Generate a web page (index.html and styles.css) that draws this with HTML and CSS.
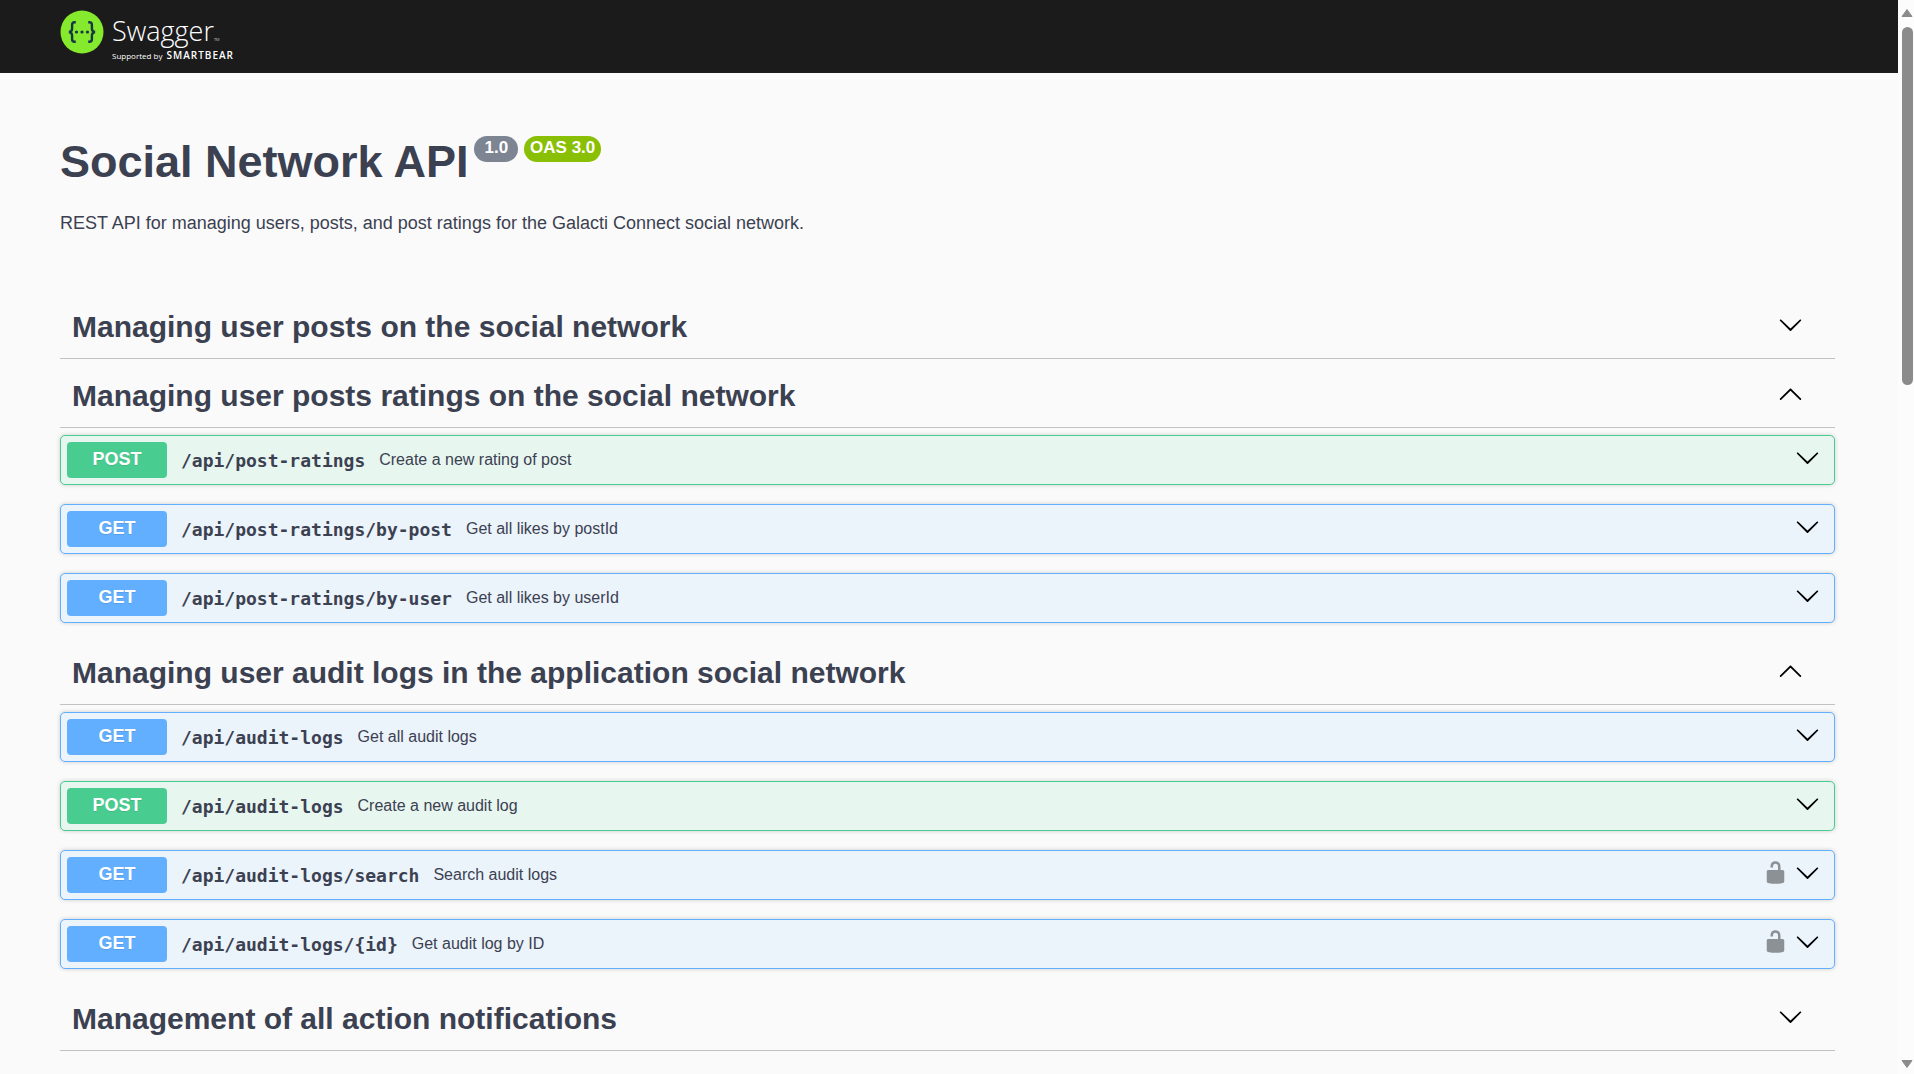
FILE: index.html
```html
<!DOCTYPE html>
<html lang="en">
<head>
<meta charset="utf-8">
<meta name="viewport" content="width=device-width, initial-scale=1">
<title>Social Network API</title>
<link rel="stylesheet" href="styles.css">
</head>
<body>
<svg class="sprite" aria-hidden="true">
  <symbol id="arrow-down" viewBox="0 0 20 20"><path d="M17.418 6.109c.272-.268.709-.268.979 0s.271.701 0 .969l-7.908 7.83c-.27.268-.707.268-.979 0l-7.908-7.83c-.27-.268-.27-.701 0-.969.271-.268.709-.268.979 0L10 13.25l7.418-7.141z"/></symbol>
  <symbol id="arrow-up" viewBox="0 0 20 20"><path d="M17.418 14.908c.272.268.709.268.979 0s.271-.701 0-.969l-7.908-7.83c-.27-.268-.707-.268-.979 0l-7.908 7.83c-.27.268-.27.701 0 .969.271.268.709.268.979 0L10 7.767l7.418 7.141z"/></symbol>
  <symbol id="unlocked" viewBox="0 0 20 20"><path d="M15.8 8H14V5.6C14 2.703 12.665 1 10 1 7.334 1 6 2.703 6 5.6V6h2v-.801C8 3.754 8.797 3 10 3c1.203 0 2 .754 2 2.199V8H4c-.553 0-1 .646-1 1.199V17c0 .549.428 1.139.951 1.307l1.197.387C5.672 18.861 6.55 19 7.1 19h5.8c.549 0 1.428-.139 1.951-.307l1.196-.387c.524-.167.953-.757.953-1.306V9.199C17 8.646 16.352 8 15.8 8z"/></symbol>
</svg>

<div class="page">
  <header class="topbar">
    <a class="logo" href="#">
      <svg class="logo-mark" viewBox="0 0 44 44" aria-hidden="true">
        <circle cx="22" cy="22" r="21.5" fill="#85ea2d"/>
        <g fill="none" stroke="#173647" stroke-width="2.4">
          <path d="M15.8 12.2h-1.2c-1.7 0-2.5.9-2.5 2.6v3.6c0 2-.9 3.3-3.1 3.6 2.2.3 3.1 1.6 3.1 3.6v3.6c0 1.7.8 2.6 2.5 2.6h1.2"/>
          <path d="M28.2 12.2h1.2c1.7 0 2.5.9 2.5 2.6v3.6c0 2 .9 3.3 3.1 3.6-2.2.3-3.1 1.6-3.1 3.6v3.6c0 1.7-.8 2.6-2.5 2.6h-1.2"/>
        </g>
        <g fill="#173647"><circle cx="16.5" cy="22" r="1.6"/><circle cx="22" cy="22" r="1.6"/><circle cx="27.5" cy="22" r="1.6"/></g>
      </svg>
      <span class="logo-text">
        <span class="logo-name">Swagger<small class="logo-tm">TM</small></span>
        <span class="logo-support">Supported by <b class="logo-brand">SMARTBEAR</b></span>
      </span>
    </a>
  </header>

  <main class="content">
    <section class="info">
      <div class="title-row">
        <h1 class="title">Social Network API</h1>
        <span class="badge">1.0</span>
        <span class="badge badge-oas">OAS 3.0</span>
      </div>
      <p class="description">REST API for managing users, posts, and post ratings for the Galacti Connect social network.</p>
    </section>

    <section class="tag">
      <h3 class="tag-heading"><button class="tag-toggle" type="button" aria-expanded="false">Managing user posts on the social network<svg class="icon"><use href="#arrow-down"/></svg></button></h3>
    </section>

    <section class="tag">
      <h3 class="tag-heading"><button class="tag-toggle" type="button" aria-expanded="true">Managing user posts ratings on the social network<svg class="icon"><use href="#arrow-up"/></svg></button></h3>
      <div class="operations">
        <div class="op op-post">
          <button class="op-main" type="button"><span class="method">POST</span><span class="path">/api/post-ratings</span><span class="summary">Create a new rating of post</span></button>
          <button class="op-icon" type="button" aria-label="Expand operation"><svg class="icon"><use href="#arrow-down"/></svg></button>
        </div>
        <div class="op op-get">
          <button class="op-main" type="button"><span class="method">GET</span><span class="path">/api/post-ratings/by-post</span><span class="summary">Get all likes by postId</span></button>
          <button class="op-icon" type="button" aria-label="Expand operation"><svg class="icon"><use href="#arrow-down"/></svg></button>
        </div>
        <div class="op op-get">
          <button class="op-main" type="button"><span class="method">GET</span><span class="path">/api/post-ratings/by-user</span><span class="summary">Get all likes by userId</span></button>
          <button class="op-icon" type="button" aria-label="Expand operation"><svg class="icon"><use href="#arrow-down"/></svg></button>
        </div>
      </div>
    </section>

    <section class="tag">
      <h3 class="tag-heading"><button class="tag-toggle" type="button" aria-expanded="true">Managing user audit logs in the application social network<svg class="icon"><use href="#arrow-up"/></svg></button></h3>
      <div class="operations">
        <div class="op op-get">
          <button class="op-main" type="button"><span class="method">GET</span><span class="path">/api/audit-logs</span><span class="summary">Get all audit logs</span></button>
          <button class="op-icon" type="button" aria-label="Expand operation"><svg class="icon"><use href="#arrow-down"/></svg></button>
        </div>
        <div class="op op-post">
          <button class="op-main" type="button"><span class="method">POST</span><span class="path">/api/audit-logs</span><span class="summary">Create a new audit log</span></button>
          <button class="op-icon" type="button" aria-label="Expand operation"><svg class="icon"><use href="#arrow-down"/></svg></button>
        </div>
        <div class="op op-get">
          <button class="op-main" type="button"><span class="method">GET</span><span class="path">/api/audit-logs/search</span><span class="summary">Search audit logs</span></button>
          <button class="op-icon op-lock" type="button" aria-label="Authorize"><svg class="icon"><use href="#unlocked"/></svg></button>
          <button class="op-icon" type="button" aria-label="Expand operation"><svg class="icon"><use href="#arrow-down"/></svg></button>
        </div>
        <div class="op op-get">
          <button class="op-main" type="button"><span class="method">GET</span><span class="path">/api/audit-logs/{id}</span><span class="summary">Get audit log by ID</span></button>
          <button class="op-icon op-lock" type="button" aria-label="Authorize"><svg class="icon"><use href="#unlocked"/></svg></button>
          <button class="op-icon" type="button" aria-label="Expand operation"><svg class="icon"><use href="#arrow-down"/></svg></button>
        </div>
      </div>
    </section>

    <section class="tag">
      <h3 class="tag-heading"><button class="tag-toggle" type="button" aria-expanded="false">Management of all action notifications<svg class="icon"><use href="#arrow-down"/></svg></button></h3>
    </section>
  </main>
</div>

<div class="scrollbar" aria-hidden="true">
  <svg class="scroll-arrow" viewBox="0 0 12 10"><path d="M6 1.500 11 8.500H1z"/></svg>
  <div class="scroll-track"><div class="scroll-thumb"></div></div>
  <svg class="scroll-arrow" viewBox="0 0 12 10"><path d="M6 8.500 1 1.500h10z"/></svg>
</div>
</body>
</html>
```

FILE: styles.css
```css
* {
  box-sizing: border-box;
}

html {
  scrollbar-width: none;
}

body {
  display: flex;
  align-items: flex-start;
  margin: 0;
  background: #fafafa;
  color: #3b4151;
  font-family: Arial, "Liberation Sans", sans-serif;
}

button {
  padding: 0;
  border: 0;
  background: none;
  color: inherit;
  font: inherit;
  text-align: left;
  cursor: pointer;
}

.sprite {
  display: none;
}

.page {
  flex: 1;
  min-width: 0;
}

/* Top bar */
.topbar {
  display: flex;
  align-items: flex-start;
  height: 73px;
  padding: 10px 60px 0;
  background: #1b1b1b;
}

.logo {
  display: flex;
  gap: 8px;
  color: #fff;
  font-family: "Open Sans", sans-serif;
  text-decoration: none;
}

.logo-mark {
  width: 44px;
  height: 44px;
}

.logo-text {
  display: flex;
  flex-direction: column;
  padding-top: 4px;
}

.logo-name {
  font-size: 27px;
  font-weight: 300;
  line-height: 34px;
}

.logo-tm {
  font-size: 4px;
  line-height: 4px;
}

.logo-support {
  font-size: 8px;
  line-height: 14px;
  white-space: nowrap;
}

.logo-brand {
  margin-left: 2px;
  font-size: 10px;
  font-weight: 600;
  letter-spacing: 1px;
}

/* API information */
.content {
  padding: 0 63px 0 60px;
}

.info {
  padding: 63px 0 63px;
}

.title-row {
  display: flex;
  align-items: flex-start;
  gap: 6px;
}

.title {
  margin: 0;
  font-size: 45px;
  line-height: 52px;
}

.badge {
  height: 26px;
  padding: 0 10px;
  border-radius: 13px;
  background: #7d8492;
  color: #fff;
  font-size: 17px;
  font-weight: 700;
  line-height: 24px;
}

.badge-oas {
  padding: 0 6px;
  background: #89bf04;
}

.description {
  margin: 25px 0 0;
  font-size: 18px;
  line-height: 21px;
}

/* Tag sections */
.tag-heading {
  margin: 0 0 7px;
  font-size: 30px;
}

.tag-toggle {
  display: flex;
  align-items: center;
  justify-content: space-between;
  width: 100%;
  min-height: 62px;
  padding: 0 32px 2px 12px;
  border-bottom: 1px solid rgba(59, 65, 81, 0.3);
}

.icon {
  display: block;
  flex: none;
  width: 25px;
  height: 25px;
  margin-bottom: 5px;
  fill: #000;
}

.operations {
  display: grid;
  gap: 19px;
  padding-bottom: 20px;
}

/* Operation rows */
.op {
  display: flex;
  align-items: center;
  gap: 7px;
  min-height: 50px;
  padding: 6px 14px 6px 6px;
  border: 1px solid;
  border-radius: 5px;
  box-shadow: 0 0 4px rgba(0, 0, 0, 0.19);
}

.op-get {
  border-color: #61affe;
  background: #ebf3fb;
}

.op-post {
  border-color: #49cc90;
  background: #e8f6f0;
}

.op-main {
  display: flex;
  flex: 1;
  align-items: center;
  gap: 14px;
}

.method {
  width: 100px;
  border-radius: 4px;
  color: #fff;
  font-size: 18px;
  font-weight: 700;
  line-height: 34px;
  padding-bottom: 2px;
  text-align: center;
  text-shadow: 0 1px 0 rgba(0, 0, 0, 0.1);
}

.op-get .method {
  background: #61affe;
}

.op-post .method {
  background: #49cc90;
}

.path {
  font-family: Consolas, "DejaVu Sans Mono", monospace;
  font-size: 18px;
  font-weight: 700;
}

.summary {
  font-size: 16px;
}

.op-lock {
  opacity: 0.4;
}

/* Page scrollbar */
.scrollbar {
  position: sticky;
  top: 0;
  display: flex;
  flex-direction: column;
  align-items: flex-end;
  width: 16px;
  height: 100vh;
  padding: 8px 1px 5px 0;
  background: #fcfcfc;
}

.scroll-arrow {
  width: 12px;
  height: 10px;
  fill: #8b8b8b;
  stroke: #8b8b8b;
  stroke-linejoin: round;
}

.scroll-track {
  flex: 1;
  padding: 9px 0;
}

.scroll-thumb {
  width: 11px;
  height: 35%;
  border-radius: 6px;
  background: #8b8b8b;
}
```
